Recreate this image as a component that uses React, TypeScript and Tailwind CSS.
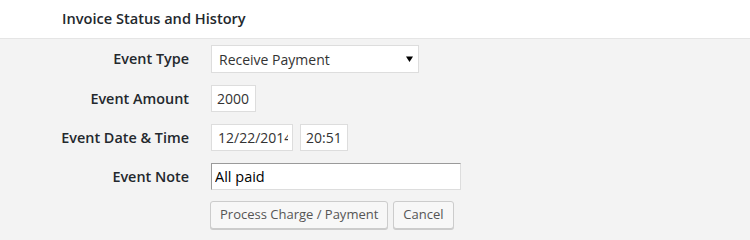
import { useState } from 'react';

const font = { fontFamily: '"Open Sans", "Liberation Sans", sans-serif' };

function Row({ label, children }: { label: string; children: React.ReactNode }) {
  return (
    <div className="flex items-center">
      <label className="w-[189px] shrink-0 text-right text-[14.4px] font-semibold text-[#23282d]">{label}</label>
      <div className="ml-[22px] flex items-center gap-[7px]">{children}</div>
    </div>
  );
}

export default function App() {
  const [type, setType] = useState('Receive Payment');
  const [amount, setAmount] = useState('2000');
  const [date, setDate] = useState('12/22/2014');
  const [time, setTime] = useState('20:51');
  const [note, setNote] = useState('All paid');

  return (
    <div className="h-[240px] w-[750px] overflow-hidden bg-[#f3f3f3]" style={font}>
      {/* Header */}
      <div className="flex h-[39px] items-center border-b border-[#e5e5e5] bg-white pl-[62px]">
        <h2 className="text-[14.6px] font-semibold text-[#23282d]">Invoice Status and History</h2>
      </div>

      {/* Form */}
      <div className="flex flex-col gap-3 pt-[6px]">
        <Row label="Event Type">
          <div className="relative">
            <select
              value={type}
              onChange={(e) => setType(e.target.value)}
              className="h-[28px] w-[208px] appearance-none border border-[#dddddd] bg-white pl-[7px] text-[14px] text-[#333] outline-none"
            >
              <option>Receive Payment</option>
              <option>Add Charge</option>
              <option>Refund</option>
            </select>
            <svg className="pointer-events-none absolute right-[6px] top-[11px]" width="7" height="7" viewBox="0 0 7 7">
              <path d="M0 0.5h7L3.5 6z" fill="#000" />
            </svg>
          </div>
        </Row>
        <Row label="Event Amount">
          <input
            value={amount}
            onChange={(e) => setAmount(e.target.value)}
            className="h-[27px] w-[45px] border border-[#dddddd] bg-white px-[5px] text-[14px] text-[#333] outline-none"
          />
        </Row>
        <Row label="Event Date & Time">
          <input
            value={date}
            onChange={(e) => setDate(e.target.value)}
            className="h-[27px] w-[82px] border border-[#dddddd] bg-white pl-[6px] pr-[4px] text-[14px] text-[#333] outline-none"
          />
          <input
            value={time}
            onChange={(e) => setTime(e.target.value)}
            className="h-[27px] w-[48px] border border-[#dddddd] bg-white px-[5px] text-[14px] text-[#333] outline-none"
          />
        </Row>
        <Row label="Event Note">
          <input
            value={note}
            onChange={(e) => setNote(e.target.value)}
            className="h-[27px] w-[250px] border border-l-[#9a9a9a] border-t-[#9a9a9a] border-r-[#dddddd] border-b-[#dddddd] bg-white px-[3px] text-[14.5px] text-black outline-none"
          />
        </Row>
        <div className="-mt-[1px] ml-[210px] flex gap-[5px]">
          <button className="h-[28px] rounded-[3px] border border-[#cccccc] bg-[#f7f7f7] px-[9px] text-[13px] text-[#555] shadow-[0_1px_0_#cccccc]">
            Process Charge / Payment
          </button>
          <button className="h-[28px] rounded-[3px] border border-[#cccccc] bg-[#f7f7f7] px-[9px] text-[13px] text-[#555] shadow-[0_1px_0_#cccccc]">
            Cancel
          </button>
        </div>
      </div>
    </div>
  );
}
